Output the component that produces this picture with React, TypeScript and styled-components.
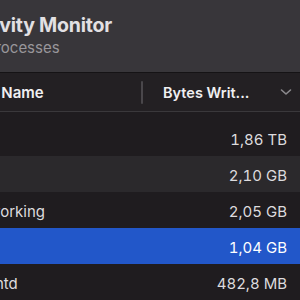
import React from "react";
import styled, { createGlobalStyle } from "styled-components";

interface Proc {
  name: string;
  written: string;
}

const processes: Proc[] = [
  { name: "mds", written: "1,86 TB" },
  { name: "Mail", written: "2,10 GB" },
  { name: "Networking", written: "2,05 GB" },
  { name: "bird", written: "1,04 GB" },
  { name: "parentd", written: "482,8 MB" },
];

const SELECTED = 3;

function App() {
  return (
    <Viewport>
      <GlobalStyle />
      <Window>
        <TitleBar>
          <Title>Activity Monitor</Title>
          <Subtitle>All Processes</Subtitle>
        </TitleBar>
        <HeaderRow>
          <HeaderCell>Process Name</HeaderCell>
          <Divider />
          <HeaderCell className="bytes">
            Bytes Writ...
            <svg width="12" height="8" viewBox="0 0 12 8">
              <path
                d="M1.5 2 L6 6 L10.5 2"
                fill="none"
                stroke="#8c8a8e"
                strokeWidth="1.6"
                strokeLinecap="round"
                strokeLinejoin="round"
              />
            </svg>
          </HeaderCell>
        </HeaderRow>
        <List>
          {processes.map((p, i) => (
            <Row key={p.name} $odd={i % 2 === 1} $selected={i === SELECTED}>
              <NameCell>
                <ProcIcon />
                <span>{p.name}</span>
              </NameCell>
              <Value>{p.written}</Value>
            </Row>
          ))}
        </List>
      </Window>
    </Viewport>
  );
}

export default App;

const GlobalStyle = createGlobalStyle`
  html, body {
    margin: 0;
    padding: 0;
    background: #1f1c1f;
  }
  body {
    font-family: Inter, "Noto Sans", "Liberation Sans", sans-serif;
    -webkit-font-smoothing: antialiased;
  }
`;

const Viewport = styled.div`
  width: 300px;
  height: 300px;
  overflow: hidden;
  background: #1f1c1f;
`;

const Window = styled.div`
  width: 370px;
  margin-left: -70px;
`;

const TitleBar = styled.div`
  height: 73px;
  box-sizing: border-box;
  padding: 13px 0 0 32px;
  background: #38363a;
  border-bottom: 1px solid #151315;
`;

const Title = styled.div`
  font-size: 19.5px;
  line-height: 24px;
  font-weight: 700;
  letter-spacing: -0.2px;
  color: #e2e0e3;
`;

const Subtitle = styled.div`
  margin-top: 2px;
  padding-left: 2px;
  font-size: 15px;
  line-height: 18px;
  color: #98969a;
`;

const HeaderRow = styled.div`
  height: 38px;
  display: grid;
  grid-template-columns: 211px 2px 1fr;
  align-items: center;
  background: #232023;
  border-bottom: 1px solid #3a383b;
`;

const HeaderCell = styled.div`
  padding-left: 0;
  font-size: 15px;
  font-weight: 600;
  word-spacing: 9px;
  color: #f0eff1;
  white-space: nowrap;

  &.bytes {
    display: flex;
    align-items: center;
    justify-content: space-between;
    padding-left: 20px;
    padding-right: 8px;
    font-size: 14.5px;
    word-spacing: 0;
  }
`;

const Divider = styled.div`
  width: 2px;
  height: 23px;
  background: #4a474b;
  border-radius: 1px;
`;

const List = styled.div`
  padding-top: 8px;
`;

const Row = styled.div<{ $odd: boolean; $selected: boolean }>`
  height: 36px;
  box-sizing: border-box;
  padding: 2px 13px 0 9px;
  display: flex;
  align-items: center;
  justify-content: space-between;
  background: ${(p) =>
    p.$selected ? "#2257c9" : p.$odd ? "#2b292c" : "transparent"};
  color: ${(p) => (p.$selected ? "#ffffff" : "#dddbde")};
  font-size: 15px;
`;

const NameCell = styled.div`
  display: flex;
  align-items: center;
  gap: 8px;
`;

const ProcIcon = styled.div`
  width: 16px;
  height: 16px;
  border-radius: 4px;
  background: #5a585c;
`;

const Value = styled.div`
  font-variant-numeric: tabular-nums;
`;
